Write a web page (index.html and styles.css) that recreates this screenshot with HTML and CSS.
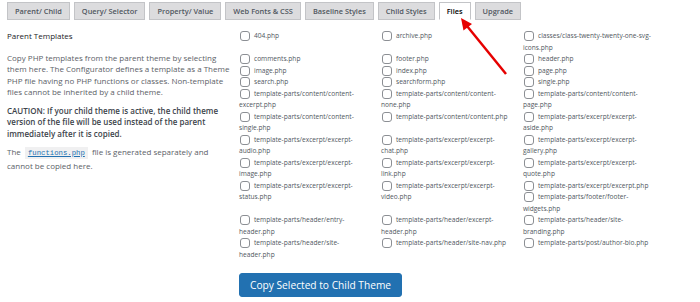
FILE: index.html
```html
<!DOCTYPE html>
<html lang="en">
<head>
    <meta charset="UTF-8">
    <meta name="viewport" content="width=device-width, initial-scale=1.0">
    <title>Files</title>
    <link rel="stylesheet" href="styles.css">
</head>
<body>
    <div class="wrap">
        <nav class="tabs">
            <a class="tab" href="#">Parent/ Child</a>
            <a class="tab" href="#">Query/ Selector</a>
            <a class="tab" href="#">Property/ Value</a>
            <a class="tab" href="#">Web Fonts &amp; CSS</a>
            <a class="tab" href="#">Baseline Styles</a>
            <a class="tab" href="#">Child Styles</a>
            <a class="tab active" href="#">Files</a>
            <a class="tab" href="#">Upgrade</a>
        </nav>

        <div class="panel">
            <div class="intro">
                <h3>Parent Templates</h3>
                <p>Copy PHP templates from the parent theme by selecting them here. The Configurator defines a template as a Theme PHP file having no PHP functions or classes. Non-template files cannot be inherited by a child theme.</p>
                <p class="caution">CAUTION: If your child theme is active, the child theme version of the file will be used instead of the parent immediately after it is copied.</p>
                <p>The <a class="code" href="#">functions.php</a> file is generated separately and cannot be copied here.</p>
            </div>

            <form class="files">
                <div class="file-list">
                    <label class="file"><input type="checkbox">404.php</label>
                    <label class="file"><input type="checkbox">archive.php</label>
                    <label class="file"><input type="checkbox">classes/class-twenty-twenty-one-svg-icons.php</label>
                    <label class="file"><input type="checkbox">comments.php</label>
                    <label class="file"><input type="checkbox">footer.php</label>
                    <label class="file"><input type="checkbox">header.php</label>
                    <label class="file"><input type="checkbox">image.php</label>
                    <label class="file"><input type="checkbox">index.php</label>
                    <label class="file"><input type="checkbox">page.php</label>
                    <label class="file"><input type="checkbox">search.php</label>
                    <label class="file"><input type="checkbox">searchform.php</label>
                    <label class="file"><input type="checkbox">single.php</label>
                    <label class="file"><input type="checkbox">template-parts/content/content-excerpt.php</label>
                    <label class="file"><input type="checkbox">template-parts/content/content-none.php</label>
                    <label class="file"><input type="checkbox">template-parts/content/content-page.php</label>
                    <label class="file"><input type="checkbox">template-parts/content/content-single.php</label>
                    <label class="file"><input type="checkbox">template-parts/content/content.php</label>
                    <label class="file"><input type="checkbox">template-parts/excerpt/excerpt-aside.php</label>
                    <label class="file"><input type="checkbox">template-parts/excerpt/excerpt-audio.php</label>
                    <label class="file"><input type="checkbox">template-parts/excerpt/excerpt-chat.php</label>
                    <label class="file"><input type="checkbox">template-parts/excerpt/excerpt-gallery.php</label>
                    <label class="file"><input type="checkbox">template-parts/excerpt/excerpt-image.php</label>
                    <label class="file"><input type="checkbox">template-parts/excerpt/excerpt-link.php</label>
                    <label class="file"><input type="checkbox">template-parts/excerpt/excerpt-quote.php</label>
                    <label class="file"><input type="checkbox">template-parts/excerpt/excerpt-status.php</label>
                    <label class="file"><input type="checkbox">template-parts/excerpt/excerpt-video.php</label>
                    <label class="file"><input type="checkbox">template-parts/excerpt/excerpt.php</label>
                    <label class="file"><input type="checkbox">template-parts/footer/footer-widgets.php</label>
                    <label class="file"><input type="checkbox">template-parts/header/entry-header.php</label>
                    <label class="file"><input type="checkbox">template-parts/header/excerpt-header.php</label>
                    <label class="file"><input type="checkbox">template-parts/header/site-branding.php</label>
                    <label class="file"><input type="checkbox">template-parts/header/site-header.php</label>
                    <label class="file"><input type="checkbox">template-parts/header/site-nav.php</label>
                    <label class="file"><input type="checkbox">template-parts/post/author-bio.php</label>
                </div>
                <button type="button" class="copy-btn">Copy Selected to Child Theme</button>
            </form>
        </div>

        <!-- red pointer at the Files tab -->
        <svg class="arrow" width="700" height="302" viewBox="0 0 700 302">
            <line x1="506" y1="74" x2="467" y2="26" stroke="#e60000" stroke-width="2.5"/>
            <polygon points="461,18 472,24 463.5,30.5" fill="#e60000"/>
        </svg>
    </div>
</body>
</html>
```

FILE: styles.css
```css
body {
    margin: 0;
    background: #fff;
    font-family: "Open Sans", "Noto Sans", sans-serif;
    color: #50575e;
}
.wrap {
    position: relative;
    width: 700px;
    height: 302px;
    overflow: hidden;
}
.tabs {
    display: flex;
    gap: 4px;
    padding: 2px 0 0 7px;
}
.tab {
    height: 16px;
    line-height: 16px;
    padding: 0 7px;
    background: #dcdcde;
    border: 1px solid #c3c4c7;
    color: #50575e;
    font-size: 7.4px;
    font-weight: 600;
    text-decoration: none;
    white-space: nowrap;
}
.tab.active {
    background: #fff;
    border-bottom-color: #fff;
    color: #000;
}
.panel {
    display: flex;
    padding: 10px 0 0 7px;
}
.intro {
    width: 224px;
    margin-right: 8px;
    font-size: 8px;
    line-height: 11.5px;
    color: #5c6167;
}
.intro h3 {
    margin: 0 0 10px;
    font-size: 8px;
    font-weight: 400;
    color: #1d2327;
}
.intro p {
    margin: 0 0 7px;
}
.intro .caution {
    color: #3c434a;
    font-weight: 600;
}
.intro .code {
    margin: 0 2px;
    padding: 2px 3px;
    background: #f0f0f1;
    color: #2271b1;
    font-family: "Liberation Mono", monospace;
    font-size: 7.3px;
}
.files {
    width: 426px;
}
.file-list {
    display: flow-root;
}
.file {
    float: left;
    width: 33.333%;
    box-sizing: border-box;
    padding-right: 12px;
    font-size: 6.6px;
    line-height: 11.5px;
    color: #50575e;
}
.file input {
    appearance: none;
    width: 10px;
    height: 10px;
    margin: -2px 4px -2px 1px;
    border: 1px solid #8c8f94;
    border-radius: 3px;
    background: #fff;
    vertical-align: middle;
}
.copy-btn {
    display: block;
    margin-top: 13px;
    height: 24px;
    padding: 0 10px;
    background: #2271b1;
    border: 1px solid #2271b1;
    border-radius: 3px;
    color: #fff;
    font-family: "Open Sans", "Noto Sans", sans-serif;
    font-size: 10.2px;
    cursor: pointer;
}
.arrow {
    position: absolute;
    top: 0;
    left: 0;
    pointer-events: none;
}
```
